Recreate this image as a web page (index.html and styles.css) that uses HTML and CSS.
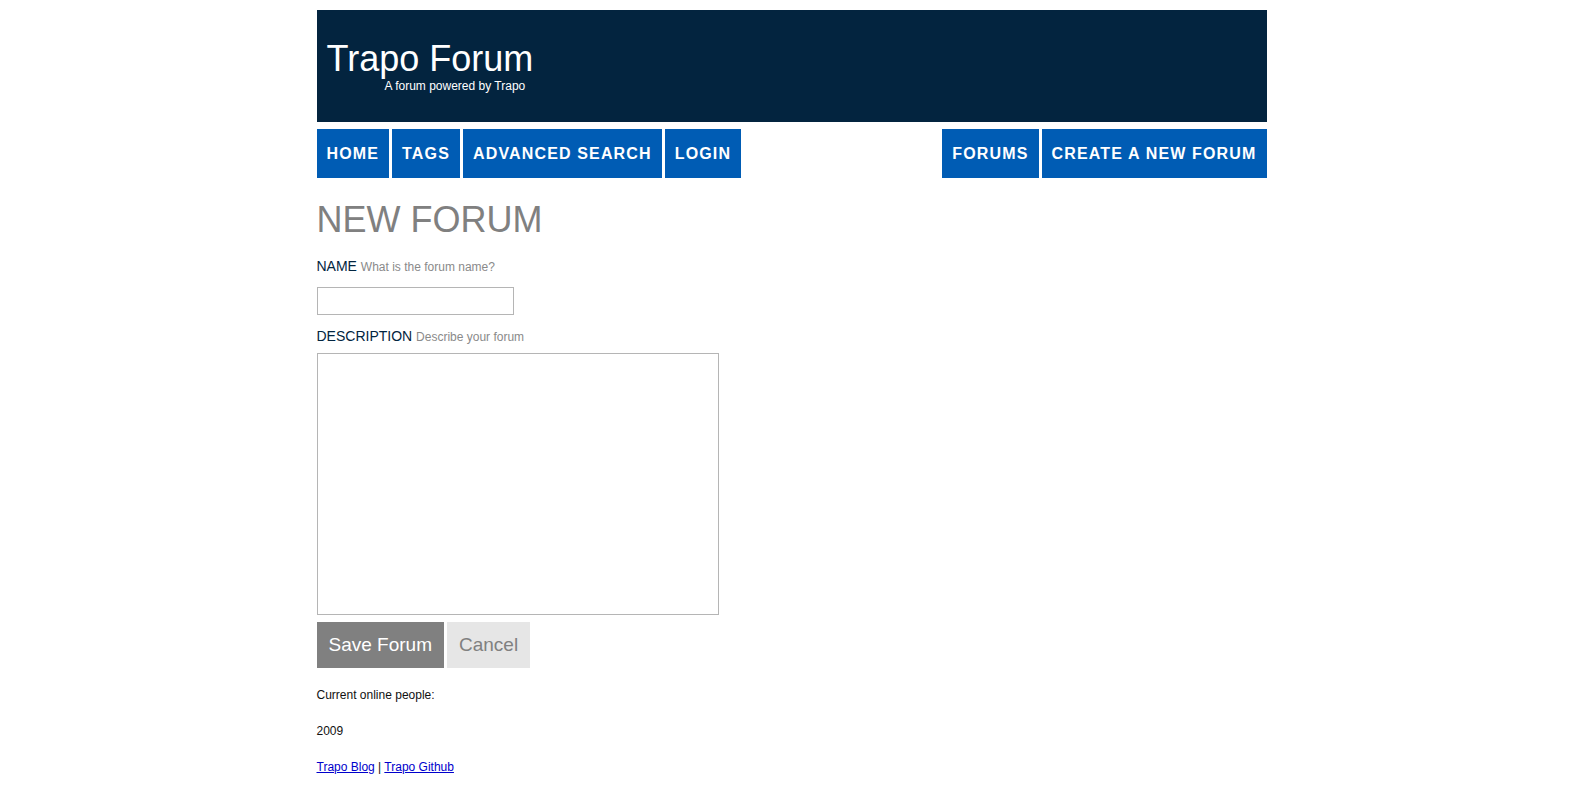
FILE: index.html
```html
<!DOCTYPE html>
<html lang="en">
<head>
<meta charset="utf-8">
<title>Trapo Forum</title>
<link rel="stylesheet" href="styles.css">
</head>
<body>
<div class="page">
  <header class="masthead">
    <h1 class="site-title">Trapo Forum</h1>
    <p class="site-tagline">A forum powered by Trapo</p>
  </header>
  <nav class="menu">
    <ul class="menu-group">
      <li><a class="menu-item" href="#">Home</a></li>
      <li><a class="menu-item" href="#">Tags</a></li>
      <li><a class="menu-item" href="#">Advanced Search</a></li>
      <li><a class="menu-item" href="#">Login</a></li>
    </ul>
    <ul class="menu-group">
      <li><a class="menu-item" href="#">Forums</a></li>
      <li><a class="menu-item" href="#">Create a new forum</a></li>
    </ul>
  </nav>
  <main class="content">
    <h2 class="page-title">NEW FORUM</h2>
    <form class="forum-form">
      <label class="field-label" for="name">NAME <span class="field-hint">What is the forum name?</span></label>
      <input class="field-input" id="name" type="text">
      <label class="field-label field-label-desc" for="desc">DESCRIPTION <span class="field-hint">Describe your forum</span></label>
      <textarea class="field-textarea" id="desc"></textarea>
      <div class="actions">
        <button class="btn btn-primary" type="button">Save Forum</button>
        <button class="btn btn-secondary" type="button">Cancel</button>
      </div>
    </form>
  </main>
  <footer class="footer">
    <p class="footer-line footer-online">Current online people:</p>
    <p class="footer-line footer-year">2009</p>
    <p class="footer-line"><a class="footer-link" href="#">Trapo Blog</a> | <a class="footer-link" href="#">Trapo Github</a></p>
  </footer>
</div>
</body>
</html>
```
FILE: styles.css
```css
* {
  box-sizing: border-box;
}

body {
  margin: 0;
  background: #ffffff;
  font-family: "Liberation Sans", Arial, sans-serif;
  color: #022540;
}

.page {
  width: 950px;
  margin: 10px auto 0;
}

.masthead {
  height: 112px;
  background: #03243f;
  color: #ffffff;
  padding: 29px 10px 0;
}

.site-title {
  margin: 0;
  font-size: 36px;
  line-height: 40px;
  font-weight: normal;
}

.site-tagline {
  margin: 0 0 0 58px;
  font-size: 12px;
  line-height: 14px;
}

.menu {
  display: flex;
  justify-content: space-between;
  margin-top: 7px;
}

.menu-group {
  display: flex;
  gap: 3px;
  list-style: none;
  margin: 0;
  padding: 0;
}

.menu-item {
  display: block;
  height: 49px;
  line-height: 49px;
  padding: 0 10px;
  background: #005cb4;
  color: #ffffff;
  text-decoration: none;
  text-transform: uppercase;
  font-weight: bold;
  font-size: 16px;
  letter-spacing: 1.15px;
}

.content {
  display: block;
}

.page-title {
  margin: 22px 0 0;
  font-size: 36px;
  line-height: 40px;
  font-weight: normal;
  color: #808080;
}

.forum-form {
  display: flex;
  flex-direction: column;
  align-items: flex-start;
  margin-top: 18px;
}

.field-label {
  font-size: 14px;
  line-height: 16px;
  color: #022540;
}

.field-label-desc {
  margin-top: 13px;
}

.field-hint {
  font-size: 12px;
  color: #8a8a8a;
}

.field-input {
  margin-top: 12px;
  width: 197px;
  height: 28px;
  border: 1px solid #b5b5b5;
  padding: 2px 4px;
  font: 14px "Liberation Sans", Arial, sans-serif;
}

.field-textarea {
  margin-top: 8px;
  width: 402px;
  height: 262px;
  border: 1px solid #b5b5b5;
  resize: none;
  font: 14px "Liberation Sans", Arial, sans-serif;
}

.actions {
  display: flex;
  gap: 3px;
  margin-top: 7px;
}

.btn {
  height: 46px;
  line-height: 46px;
  padding: 0 12px;
  border: 0;
  font-family: "Liberation Sans", Arial, sans-serif;
  font-size: 19px;
  cursor: pointer;
}

.btn-primary {
  background: #808080;
  color: #ffffff;
}

.btn-secondary {
  background: #e6e6e6;
  color: #808080;
}

.footer {
  margin-top: 20px;
  font-size: 12px;
  line-height: 14px;
  color: #111111;
}

.footer-line {
  margin: 0;
}

.footer-online {
  margin-bottom: 22px;
}

.footer-year {
  margin-bottom: 22px;
}

.footer-link {
  color: #0000cc;
}
```
